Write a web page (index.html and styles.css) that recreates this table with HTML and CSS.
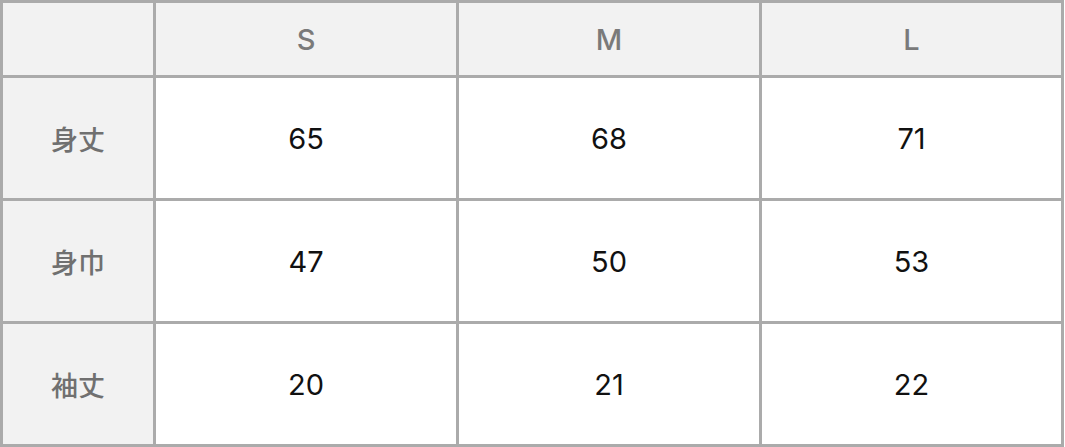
FILE: index.html
```html
<!DOCTYPE html>
<html lang="ja">
<head>
<meta charset="utf-8">
<link rel="stylesheet" href="styles.css">
</head>
<body>
<div class="size-table">
  <div class="cell head corner"></div>
  <div class="cell head">S</div>
  <div class="cell head">M</div>
  <div class="cell head">L</div>

  <div class="cell label">身丈</div>
  <div class="cell value">65</div>
  <div class="cell value">68</div>
  <div class="cell value">71</div>

  <div class="cell label">身巾</div>
  <div class="cell value">47</div>
  <div class="cell value">50</div>
  <div class="cell value">53</div>

  <div class="cell label">袖丈</div>
  <div class="cell value">20</div>
  <div class="cell value">21</div>
  <div class="cell value">22</div>
</div>
</body>
</html>
```
FILE: styles.css
```css
html, body {
  margin: 0;
  padding: 0;
  background: #ffffff;
}

.size-table {
  width: 1064px;
  box-sizing: border-box;
  display: grid;
  grid-template-columns: 150px 300px 300px 1fr;
  grid-template-rows: 72px 120px 120px 120px;
  gap: 3px;
  padding: 3px;
  background: #ababab;
  font-family: Inter, "Noto Sans CJK JP", sans-serif;
}

.cell {
  display: flex;
  align-items: center;
  justify-content: center;
  background: #ffffff;
}

.head {
  background: #f2f2f2;
  color: #7a7a7a;
  font-size: 29px;
  font-weight: 500;
}

.label {
  background: #f2f2f2;
  color: #707070;
  font-family: "Noto Sans CJK JP", sans-serif;
  font-weight: 500;
  font-size: 27px;
}

.value {
  color: #111111;
  font-size: 29px;
}
```
